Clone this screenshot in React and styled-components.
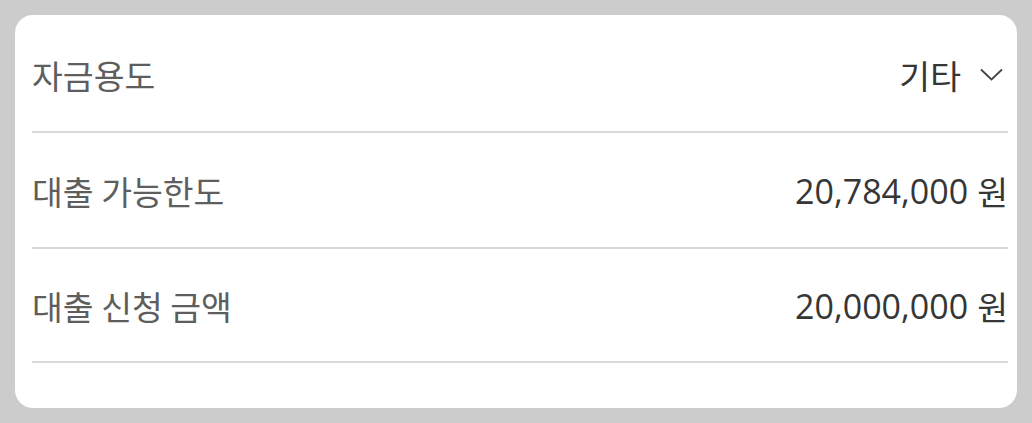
import React from "react";
import styled, { createGlobalStyle } from "styled-components";

const GlobalStyle = createGlobalStyle`
  html, body {
    margin: 0;
    padding: 0;
    background: #cccccc;
  }
  body {
    font-family: "Open Sans", "Noto Sans CJK KR", sans-serif;
  }
`;

const Page = styled.div`
  padding: 15px;
  width: 1032px;
  height: 423px;
  box-sizing: border-box;
`;

const Card = styled.div`
  background: #ffffff;
  border-radius: 18px;
  padding: 2px 9px 44px 17px;
  height: 393px;
  box-sizing: border-box;
`;

const Row = styled.div`
  display: flex;
  align-items: center;
  justify-content: space-between;
  height: ${(p) => (p.$last ? "114px" : "116px")};
  box-sizing: border-box;
  border-bottom: 2px solid #d9d9d9;
  padding-top: 1px;
`;

const Label = styled.span`
  font-family: "Noto Sans CJK KR", sans-serif;
  font-size: 33.5px;
  color: #5e5e5e;
`;

const Value = styled.span`
  display: flex;
  align-items: center;
  font-size: 34px;
  font-weight: 400;
  color: #363636;
  padding-right: ${(p) => (p.$select ? "5px" : "0")};
`;

const Hangul = styled.span`
  font-family: "Noto Sans CJK KR", sans-serif;
  font-size: 33.5px;
  margin-left: ${(p) => (p.$unit ? "9px" : "0")};
`;

const ChevronBox = styled.span`
  display: flex;
  margin-left: 19px;
`;

const Chevron = () => (
  <ChevronBox>
    <svg width="23" height="13" viewBox="0 0 23 13" fill="none">
      <path d="M1 1.5 L11.5 11.5 L22 1.5" stroke="#444" strokeWidth="1.8" />
    </svg>
  </ChevronBox>
);

const rows = [
  { label: "자금용도", text: "기타", select: true },
  { label: "대출 가능한도", amount: "20,784,000" },
  { label: "대출 신청 금액", amount: "20,000,000" },
];

export default function App() {
  return (
    <>
      <GlobalStyle />
      <Page>
        <Card>
          {rows.map((r, i) => (
            <Row key={r.label} $last={i === rows.length - 1}>
              <Label>{r.label}</Label>
              <Value $select={r.select}>
                {r.select ? (
                  <>
                    <Hangul>{r.text}</Hangul>
                    <Chevron />
                  </>
                ) : (
                  <>
                    {r.amount}
                    <Hangul $unit>원</Hangul>
                  </>
                )}
              </Value>
            </Row>
          ))}
        </Card>
      </Page>
    </>
  );
}
